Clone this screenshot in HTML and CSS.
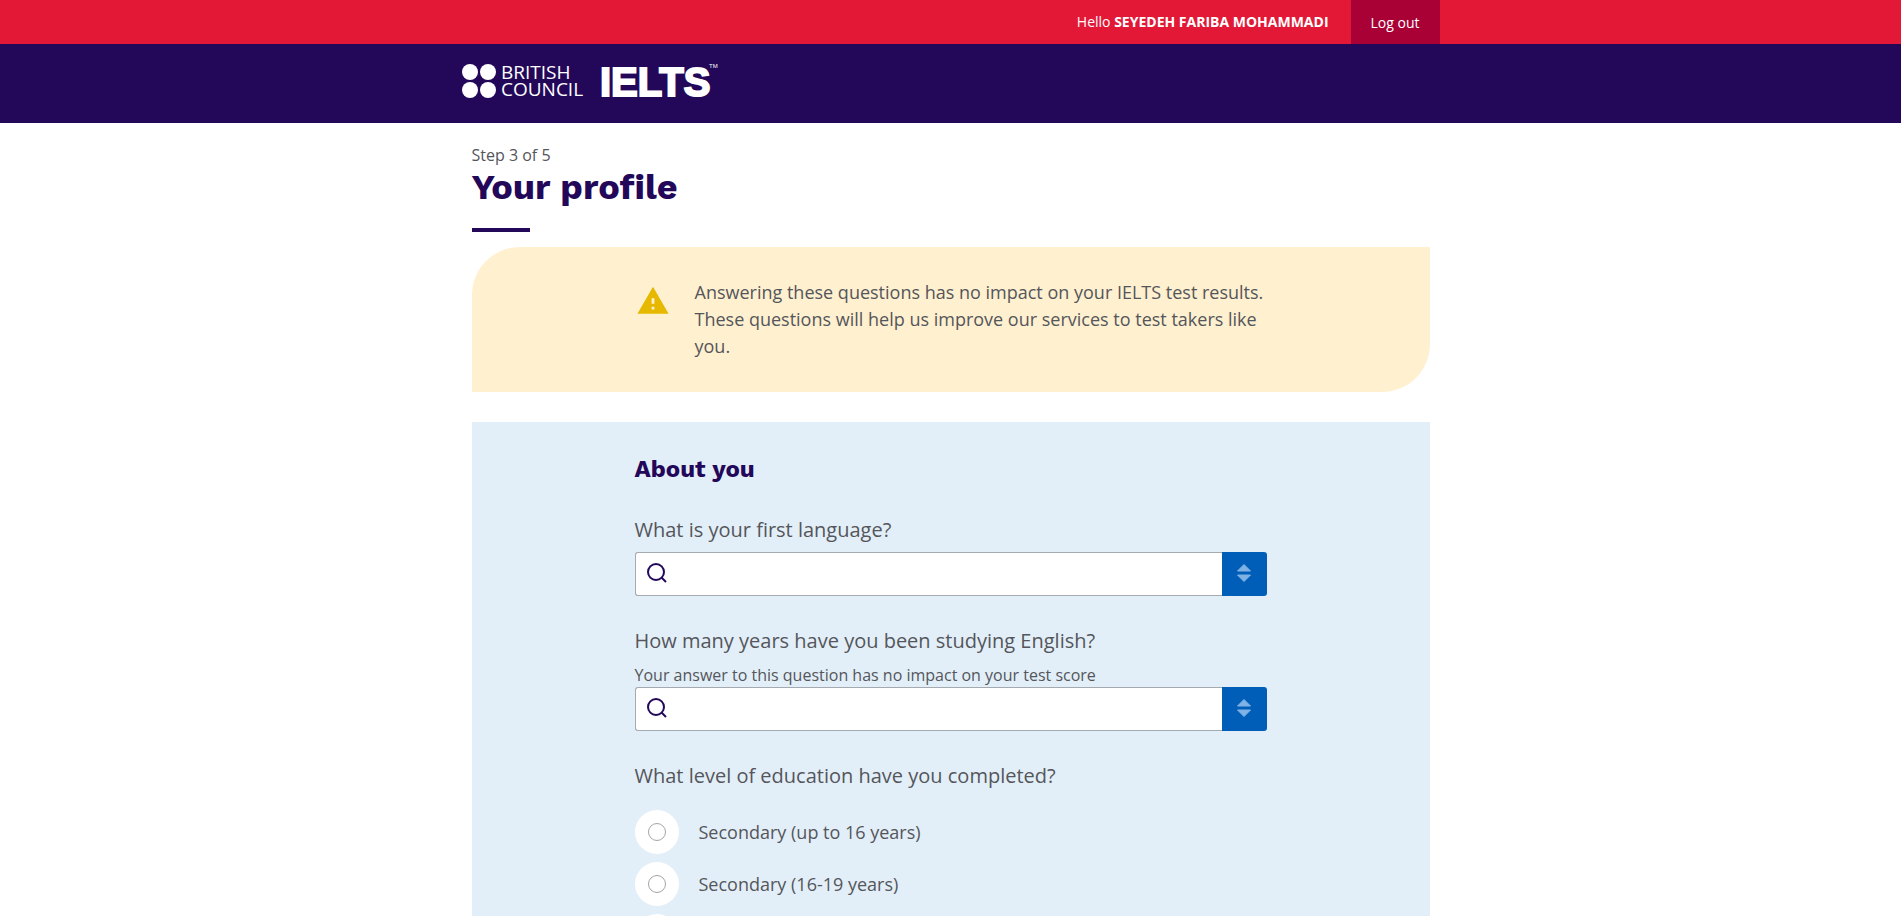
FILE: index.html
```
<!DOCTYPE html>
<html lang="en">
  <head>
    <meta charset="UTF-8" />
    <meta name="viewport" content="width=device-width, initial-scale=1" />
    <title>Your profile</title>
    <link rel="stylesheet" href="styles.css">
  </head>

  <body>
    <div class="topbar">
      <div class="container topbar-inner">
        <span>Hello <strong>SEYEDEH FARIBA MOHAMMADI</strong></span>
        <a class="logout" href="#">Log out</a>
      </div>
    </div>

    <header class="header">
      <div class="container">
        <a class="logo" href="#">
          <svg width="258" height="44" viewBox="0 0 258 44" fill="#fff" role="img" aria-label="British Council IELTS">
            <circle cx="8" cy="13" r="8" />
            <circle cx="26" cy="13" r="8" />
            <circle cx="8" cy="31" r="8" />
            <circle cx="26" cy="31" r="8" />
            <text class="logo-bc" x="39" y="20">BRITISH</text>
            <text class="logo-bc" x="39" y="37">COUNCIL</text>
            <text class="logo-ielts" x="138" y="37">IELTS</text>
            <text class="logo-tm" x="247" y="9">TM</text>
          </svg>
        </a>
      </div>
    </header>

    <main class="container main">
      <p class="step">Step 3 of 5</p>
      <h1 class="title">Your profile</h1>

      <div class="notice">
        <div class="column notice-inner">
          <svg class="notice-icon" width="36" height="36" viewBox="0 0 24 24" fill="#e6b800">
            <path d="M1 21h22L12 2 1 21zm12-3h-2v-2h2v2zm0-4h-2v-4h2v4z" />
          </svg>
          <p class="notice-text">Answering these questions has no impact on your IELTS test results. These questions will help us improve our services to test takers like you.</p>
        </div>
      </div>

      <form class="panel">
        <div class="column">
          <h2 class="section-title">About you</h2>

          <div class="field">
            <label class="label" for="language">What is your first language?</label>
            <div class="combo">
              <svg class="combo-search" width="22" height="22" viewBox="0 0 22 22" fill="none" stroke="#230859" stroke-width="2">
                <circle cx="10" cy="10" r="8" />
                <path d="M15.500 15.500L20 20" />
              </svg>
              <input class="combo-input" type="text" id="language" name="language" />
              <button class="combo-button" type="button" aria-label="Show languages">
                <svg width="14" height="20" viewBox="0 0 14 20" fill="#7fb2e5" stroke="#7fb2e5" stroke-linejoin="round">
                  <path d="M7 1.500L13.500 8H.5z" />
                  <path d="M7 18.500L13.500 12H.5z" />
                </svg>
              </button>
            </div>
          </div>

          <div class="field">
            <label class="label" for="years">How many years have you been studying English?</label>
            <p class="hint" id="years-hint">Your answer to this question has no impact on your test score</p>
            <div class="combo">
              <svg class="combo-search" width="22" height="22" viewBox="0 0 22 22" fill="none" stroke="#230859" stroke-width="2">
                <circle cx="10" cy="10" r="8" />
                <path d="M15.500 15.500L20 20" />
              </svg>
              <input class="combo-input" type="text" id="years" name="years" aria-describedby="years-hint" />
              <button class="combo-button" type="button" aria-label="Show years">
                <svg width="14" height="20" viewBox="0 0 14 20" fill="#7fb2e5" stroke="#7fb2e5" stroke-linejoin="round">
                  <path d="M7 1.500L13.500 8H.5z" />
                  <path d="M7 18.500L13.500 12H.5z" />
                </svg>
              </button>
            </div>
          </div>

          <fieldset class="field">
            <legend class="label">What level of education have you completed?</legend>
            <div class="options">
              <label class="option">
                <span class="option-disc"><input type="radio" name="education" value="16" /></span>
                Secondary (up to 16 years)
              </label>
              <label class="option">
                <span class="option-disc"><input type="radio" name="education" value="19" /></span>
                Secondary (16-19 years)
              </label>
              <label class="option">
                <span class="option-disc"><input type="radio" name="education" value="other" /></span>
              </label>
            </div>
          </fieldset>
        </div>
      </form>
    </main>
  </body>
</html>
```

FILE: styles.css
```
* {
  box-sizing: border-box;
}

body {
  margin: 0;
  font: 16px/24px "Open Sans", "Noto Sans", sans-serif;
  color: #54565b;
  background: #fff;
}

h1,
h2,
p {
  margin: 0;
}

.container {
  max-width: 978px;
  margin: 0 auto;
}

/* top bar */
.topbar {
  background: #e31836;
  color: #fff;
  font-size: 14px;
}

.topbar-inner {
  display: flex;
  justify-content: flex-end;
  align-items: center;
  gap: 22px;
}

.logout {
  padding: 11px 20px 9px;
  background: #a90035;
  color: #fff;
  text-decoration: none;
}

/* header */
.header {
  padding: 15px 0 14px;
  background: #230859;
}

.logo {
  display: block;
  width: 258px;
  height: 50px;
}

.logo svg {
  display: block;
}

.logo-bc {
  font: 500 19px "Open Sans", sans-serif;
}

.logo-ielts {
  font: bold 40px "Liberation Sans", Arial, sans-serif;
  stroke: #fff;
  stroke-width: 2px;
}

.logo-tm {
  font: 6px "Liberation Sans", Arial, sans-serif;
}

/* page */
.main {
  padding: 20px 10px 0;
}

.title {
  font: bold 36px/40px "Work Sans", Inter, sans-serif;
  color: #230859;
}

.title::after {
  content: "";
  display: block;
  width: 58px;
  height: 4px;
  margin-top: 21px;
  background: #230859;
}

.column {
  max-width: 632px;
  margin: 0 auto;
}

.notice {
  margin-top: 15px;
  padding: 32px 16px;
  background: #fff0cf;
  border-radius: 48px 0;
}

.notice-inner {
  display: flex;
  gap: 24px;
}

.notice-icon {
  flex: none;
  margin-top: 4px;
  padding: 1px;
}

.notice-text {
  font-size: 18px;
  line-height: 27px;
}

.panel {
  margin-top: 30px;
  padding: 31px 16px;
  background: #e3eff8;
}

.section-title {
  font: bold 24px/32px "Work Sans", "Open Sans", sans-serif;
  color: #230859;
}

.field {
  margin: 31px 0 0;
  padding: 0;
  border: 0;
}

.label {
  display: block;
  padding: 0;
  font-size: 20px;
  line-height: 28px;
}

.hint {
  margin-top: 8px;
}

.combo {
  display: flex;
  position: relative;
  height: 44px;
}

.label + .combo {
  margin-top: 8px;
}

.combo-search {
  position: absolute;
  left: 11px;
  top: 10px;
}

.combo-input {
  flex: 1;
  min-width: 0;
  padding: 0 12px 0 44px;
  font: inherit;
  color: inherit;
  background: #fff;
  border: 1px solid #a5a9b0;
  border-right: 0;
  border-radius: 3px 0 0 3px;
}

.combo-button {
  display: flex;
  align-items: center;
  justify-content: center;
  width: 45px;
  padding: 0 0 2px;
  background: #005eb8;
  border: 0;
  border-radius: 0 3px 3px 0;
}

.options {
  display: grid;
  gap: 8px;
  margin-top: 20px;
}

.option {
  display: flex;
  align-items: center;
  gap: 20px;
  font-size: 18px;
}

.option-disc {
  display: flex;
  align-items: center;
  justify-content: center;
  width: 44px;
  height: 44px;
  background: #fff;
  border-radius: 50%;
}

.option-disc input {
  appearance: none;
  width: 18px;
  height: 18px;
  margin: 0;
  border: 1px solid #a5a5a5;
  border-radius: 50%;
}

.option-disc input:checked {
  border: 5px solid #005eb8;
}
```
